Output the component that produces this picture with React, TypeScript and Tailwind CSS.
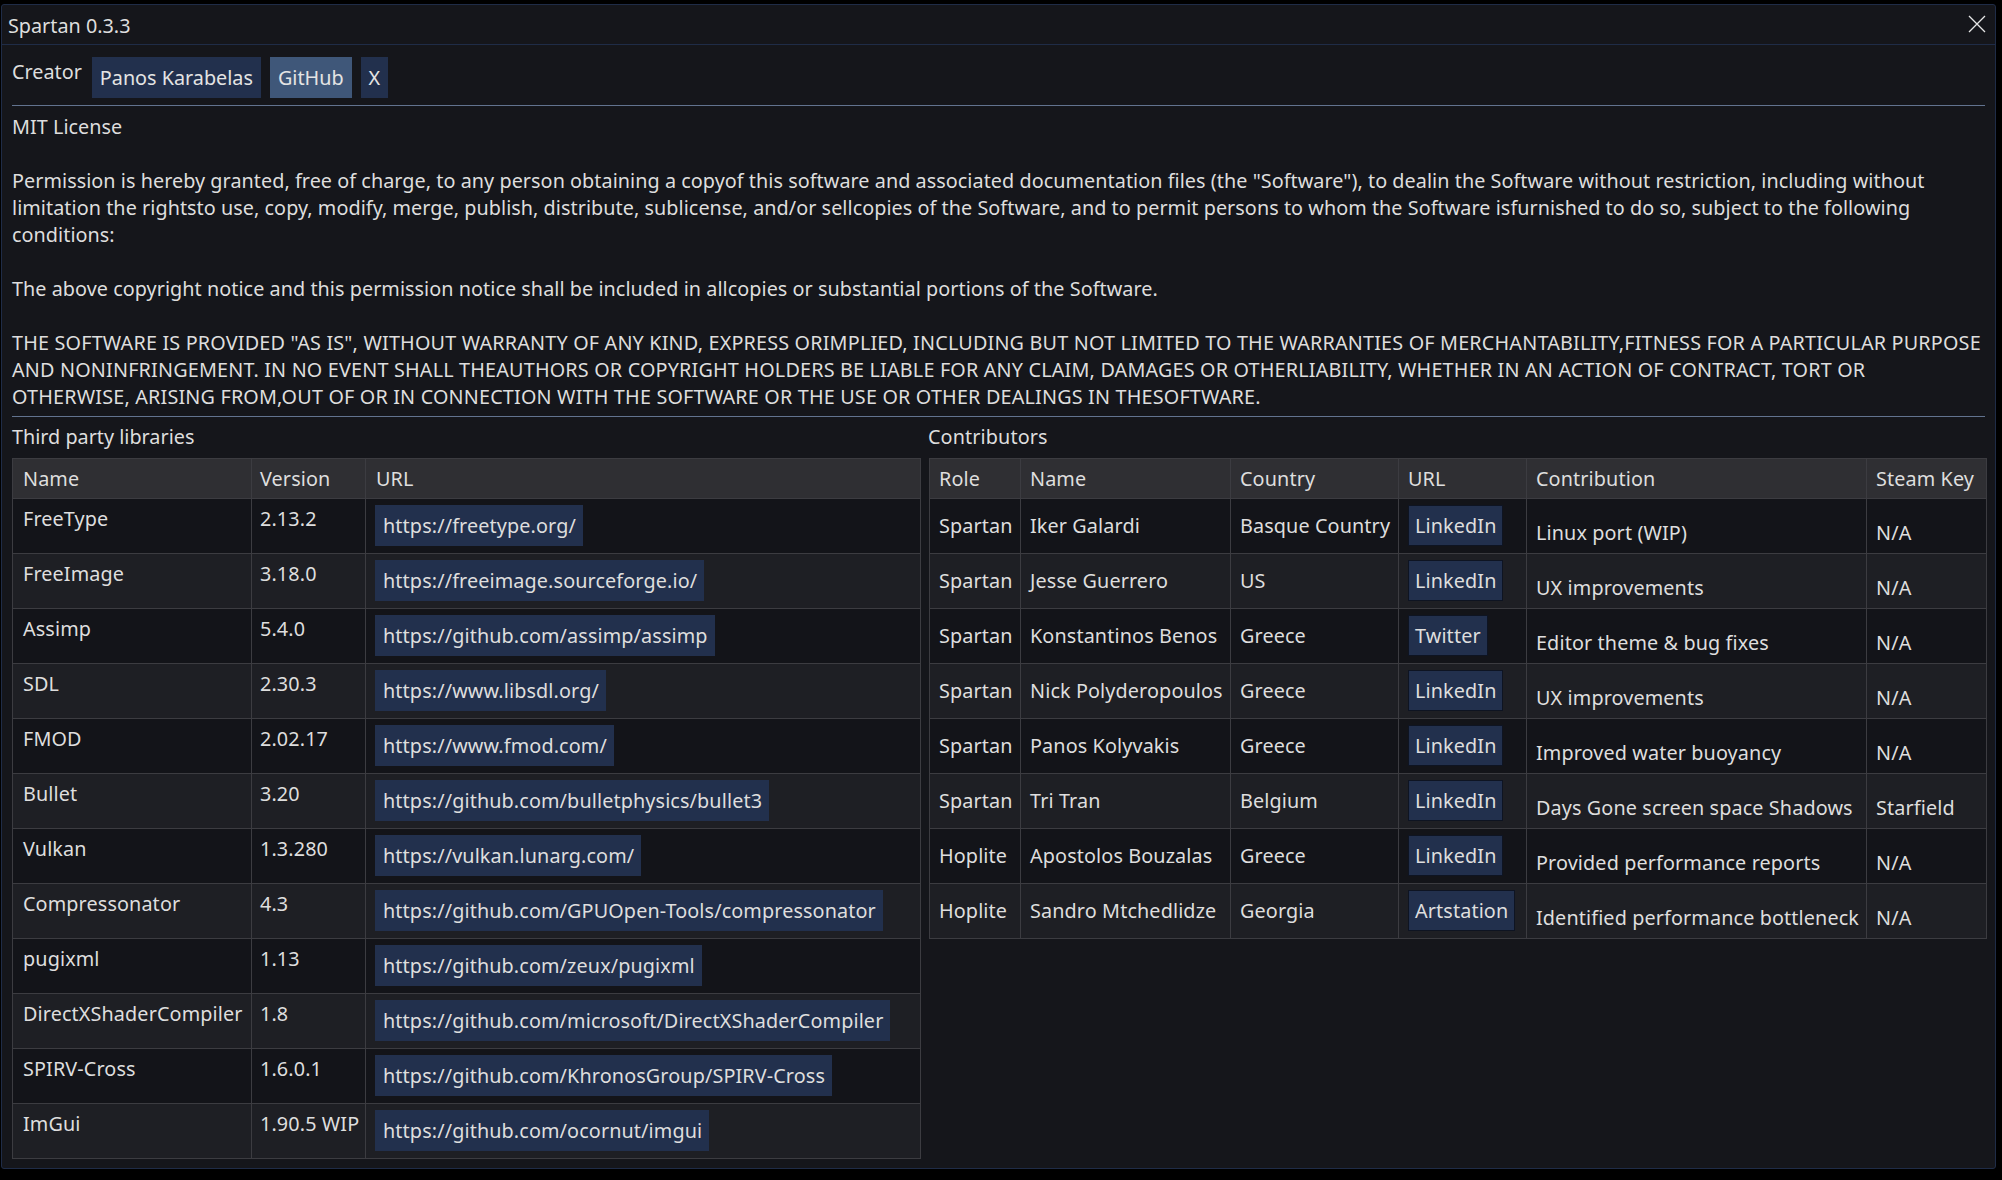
import React from 'react';

type Lib = { name: string; version: string; url: string };
type Person = { role: string; name: string; country: string; link: string; work: string; key: string };

const libs: Lib[] = [
  { name: 'FreeType', version: '2.13.2', url: 'https://freetype.org/' },
  { name: 'FreeImage', version: '3.18.0', url: 'https://freeimage.sourceforge.io/' },
  { name: 'Assimp', version: '5.4.0', url: 'https://github.com/assimp/assimp' },
  { name: 'SDL', version: '2.30.3', url: 'https://www.libsdl.org/' },
  { name: 'FMOD', version: '2.02.17', url: 'https://www.fmod.com/' },
  { name: 'Bullet', version: '3.20', url: 'https://github.com/bulletphysics/bullet3' },
  { name: 'Vulkan', version: '1.3.280', url: 'https://vulkan.lunarg.com/' },
  { name: 'Compressonator', version: '4.3', url: 'https://github.com/GPUOpen-Tools/compressonator' },
  { name: 'pugixml', version: '1.13', url: 'https://github.com/zeux/pugixml' },
  { name: 'DirectXShaderCompiler', version: '1.8', url: 'https://github.com/microsoft/DirectXShaderCompiler' },
  { name: 'SPIRV-Cross', version: '1.6.0.1', url: 'https://github.com/KhronosGroup/SPIRV-Cross' },
  { name: 'ImGui', version: '1.90.5 WIP', url: 'https://github.com/ocornut/imgui' },
];

const people: Person[] = [
  { role: 'Spartan', name: 'Iker Galardi', country: 'Basque Country', link: 'LinkedIn', work: 'Linux port (WIP)', key: 'N/A' },
  { role: 'Spartan', name: 'Jesse Guerrero', country: 'US', link: 'LinkedIn', work: 'UX improvements', key: 'N/A' },
  { role: 'Spartan', name: 'Konstantinos Benos', country: 'Greece', link: 'Twitter', work: 'Editor theme & bug fixes', key: 'N/A' },
  { role: 'Spartan', name: 'Nick Polyderopoulos', country: 'Greece', link: 'LinkedIn', work: 'UX improvements', key: 'N/A' },
  { role: 'Spartan', name: 'Panos Kolyvakis', country: 'Greece', link: 'LinkedIn', work: 'Improved water buoyancy', key: 'N/A' },
  { role: 'Spartan', name: 'Tri Tran', country: 'Belgium', link: 'LinkedIn', work: 'Days Gone screen space Shadows', key: 'Starfield' },
  { role: 'Hoplite', name: 'Apostolos Bouzalas', country: 'Greece', link: 'LinkedIn', work: 'Provided performance reports', key: 'N/A' },
  { role: 'Hoplite', name: 'Sandro Mtchedlidze', country: 'Georgia', link: 'Artstation', work: 'Identified performance bottleneck', key: 'N/A' },
];

// the license is wrapped by hand so the lines break where the original does
const license = [
  'MIT License',
  '',
  'Permission is hereby granted, free of charge, to any person obtaining a copyof this software and associated documentation files (the "Software"), to dealin the Software without restriction, including without',
  'limitation the rightsto use, copy, modify, merge, publish, distribute, sublicense, and/or sellcopies of the Software, and to permit persons to whom the Software isfurnished to do so, subject to the following',
  'conditions:',
  '',
  'The above copyright notice and this permission notice shall be included in allcopies or substantial portions of the Software.',
  '',
  'THE SOFTWARE IS PROVIDED "AS IS", WITHOUT WARRANTY OF ANY KIND, EXPRESS ORIMPLIED, INCLUDING BUT NOT LIMITED TO THE WARRANTIES OF MERCHANTABILITY,FITNESS FOR A PARTICULAR PURPOSE',
  'AND NONINFRINGEMENT. IN NO EVENT SHALL THEAUTHORS OR COPYRIGHT HOLDERS BE LIABLE FOR ANY CLAIM, DAMAGES OR OTHERLIABILITY, WHETHER IN AN ACTION OF CONTRACT, TORT OR',
  'OTHERWISE, ARISING FROM,OUT OF OR IN CONNECTION WITH THE SOFTWARE OR THE USE OR OTHER DEALINGS IN THESOFTWARE.',
];

const th = 'border border-[#3c3c41] px-[10px] pt-[6px] pb-[6px] text-left font-normal align-top';
const td = 'border border-[#3c3c41] px-[10px] align-top';

function LinkButton({ label, framed }: { label: string; framed?: boolean }) {
  return (
    <span
      className={
        'inline-block h-[41px] bg-[#22304d] whitespace-nowrap ' +
        (framed ? 'border border-[#0e1422] px-[6px] py-[6px]' : '-ml-px pl-[8px] pr-[7px] py-[7px]')
      }
    >
      {label}
    </span>
  );
}

export default function App() {
  return (
    <div className="w-[2002px] h-[1180px] bg-black pt-1 pl-px text-[19.8px] leading-[27px] tracking-[0.12px] text-[#dedede] font-['Noto_Sans','Open_Sans',sans-serif] overflow-hidden">
      <div className="w-[1995px] h-[1165px] border border-[#1f2c47] rounded-[3px] bg-[#15161b] flex flex-col">
        {/* title bar */}
        <div className="h-[40px] shrink-0 border-b border-[#1f2c47] pl-[6px] pr-[9px] pt-[7px] flex justify-between items-start">
          <span className="tracking-normal">Spartan 0.3.3</span>
          <svg width="18" height="18" viewBox="0 0 18 18" className="mt-[3px]">
            <path d="M1 1 L17 17 M17 1 L1 17" stroke="#e6e6e6" strokeWidth="1.3" fill="none" />
          </svg>
        </div>

        <div className="px-[10px] pt-[12px] flex flex-col">
          {/* creator */}
          <div className="flex items-start tracking-normal">
            <span className="mt-px mr-[10px]">Creator</span>
            <div className="flex gap-[9px]">
              <span className="h-[41px] px-[8px] py-[7px] bg-[#22304d] text-[#e4e4e4]">Panos Karabelas</span>
              <span className="h-[41px] px-[8px] py-[7px] bg-[#3f5779] text-[#e4e4e4]">GitHub</span>
              <span className="h-[41px] px-[8px] py-[7px] bg-[#22304d] text-[#e4e4e4]">X</span>
            </div>
          </div>

          <div className="mt-[7px] h-px w-[1973px] bg-[#62738f]" />

          <div className="mt-[7px]">
            {license.map((line, i) => (
              <div
                key={i}
                className={'h-[27px] whitespace-pre ' + (i >= 8 ? 'tracking-[0.18px]' : 'tracking-[0.05px]')}
              >
                {line}
              </div>
            ))}
          </div>

          <div className="mt-[6px] h-px w-[1973px] bg-[#62738f]" />

          <div className="mt-[6px] flex gap-[9px]">
            {/* third party */}
            <div className="w-[908px] shrink-0">
              <div className="tracking-normal">Third party libraries</div>
              <table className="mt-[8px] w-[908px] table-fixed border-collapse border border-[#46464b]">
                <colgroup>
                  <col className="w-[239px]" />
                  <col className="w-[114px]" />
                  <col className="w-[555px]" />
                </colgroup>
                <thead>
                  <tr className="bg-[#2f2f33]">
                    <th className={th}>Name</th>
                    <th className={th + ' pl-[8px]'}>Version</th>
                    <th className={th}>URL</th>
                  </tr>
                </thead>
                <tbody>
                  {libs.map((l, i) => (
                    <tr key={l.name} className={i % 2 === 0 ? 'bg-[#131419]' : 'bg-[#1e1f24]'}>
                      <td className={td + ' pt-[6px] whitespace-nowrap'}>{l.name}</td>
                      <td className={td + ' pt-[6px] pl-[8px] whitespace-nowrap'}>{l.version}</td>
                      <td className={td + ' pt-[6px] pb-[7px]'}>
                        <LinkButton label={l.url} />
                      </td>
                    </tr>
                  ))}
                </tbody>
              </table>
            </div>

            {/* contributors */}
            <div className="w-[1057px] shrink-0">
              <div className="-ml-px">Contributors</div>
              <table className="mt-[8px] w-[1057px] table-fixed border-collapse border border-[#46464b]">
                <colgroup>
                  <col className="w-[91px]" />
                  <col className="w-[210px]" />
                  <col className="w-[168px]" />
                  <col className="w-[128px]" />
                  <col className="w-[340px]" />
                  <col className="w-[120px]" />
                </colgroup>
                <thead>
                  <tr className="bg-[#2f2f33]">
                    <th className={th + ' pl-[9px]'}>Role</th>
                    <th className={th + ' pl-[9px]'}>Name</th>
                    <th className={th + ' pl-[9px]'}>Country</th>
                    <th className={th + ' pl-[9px]'}>URL</th>
                    <th className={th + ' pl-[9px]'}>Contribution</th>
                    <th className={th + ' pl-[9px] whitespace-nowrap'}>Steam Key</th>
                  </tr>
                </thead>
                <tbody>
                  {people.map((p, i) => (
                    <tr key={p.name} className={i % 2 === 0 ? 'bg-[#131419]' : 'bg-[#1e1f24]'}>
                      <td className={td + ' pl-[9px] pt-[13px] whitespace-nowrap'}>{p.role}</td>
                      <td className={td + ' pl-[9px] pt-[13px] whitespace-nowrap'}>{p.name}</td>
                      <td className={td + ' pl-[9px] pt-[13px] whitespace-nowrap'}>{p.country}</td>
                      <td className={td + ' pl-[9px] pt-[6px] pb-[7px]'}>
                        <LinkButton label={p.link} framed />
                      </td>
                      <td className={td + ' pl-[9px] pt-[20px] whitespace-nowrap'}>{p.work}</td>
                      <td className={td + ' pl-[9px] pt-[20px] whitespace-nowrap'}>{p.key}</td>
                    </tr>
                  ))}
                </tbody>
              </table>
            </div>
          </div>
        </div>
      </div>
    </div>
  );
}
